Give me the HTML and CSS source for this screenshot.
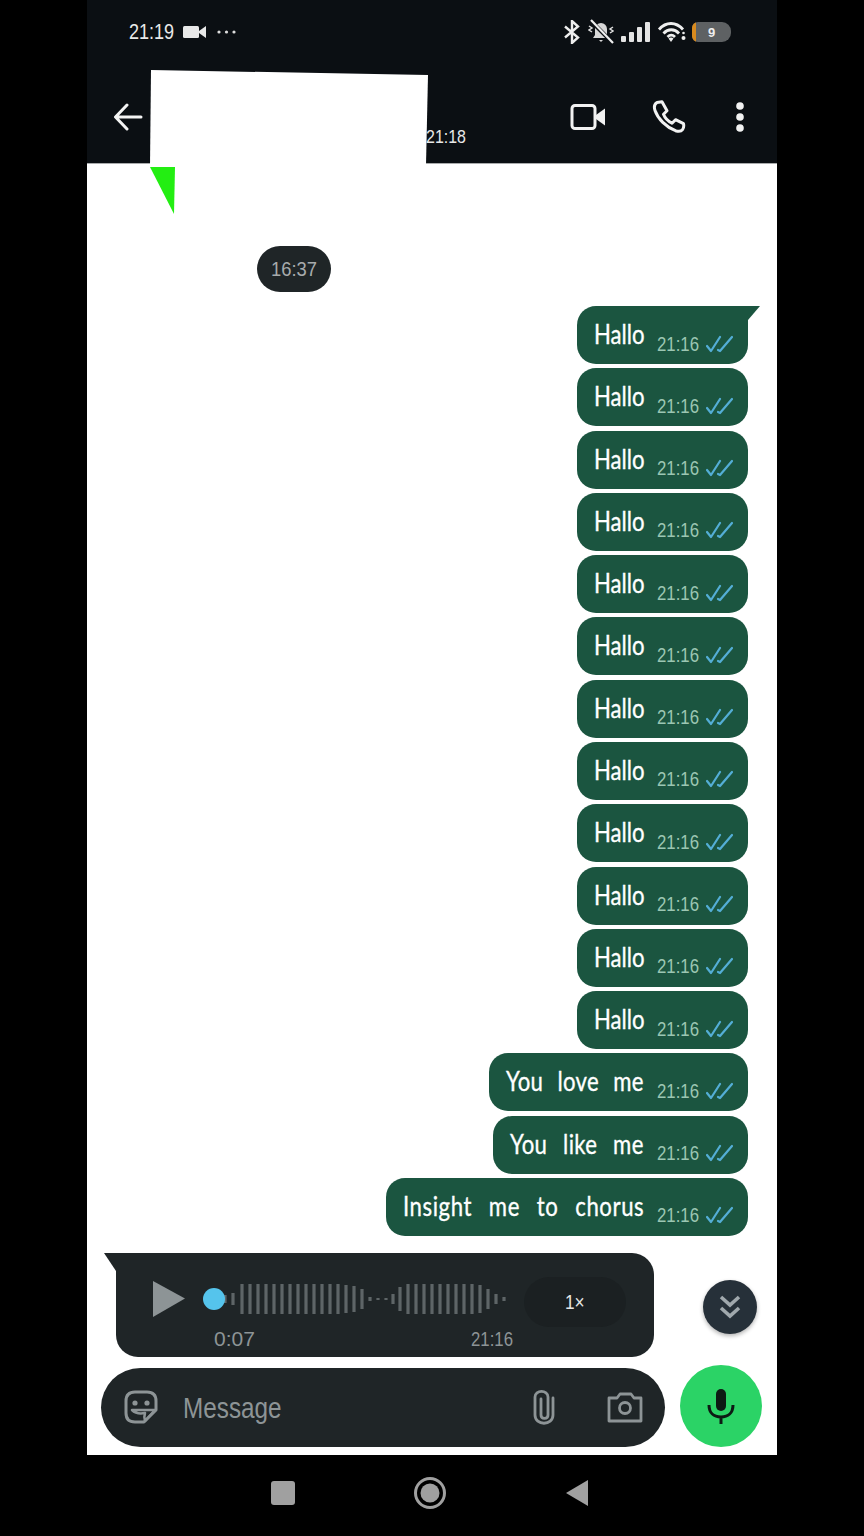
FILE: index.html
```html
<!DOCTYPE html>
<html lang="en">
<head>
<meta charset="utf-8">
<title>Chat</title>
<link rel="stylesheet" href="styles.css">
</head>
<body>
<svg width="0" height="0" class="defs">
  <symbol id="ticks" viewBox="0 0 27 18">
    <path d="M1 11l4 5L14 2M12 15l2 1L26 2" fill="none" stroke="#54aed6" stroke-width="2.200" stroke-linecap="round" stroke-linejoin="round"/>
  </symbol>
</svg>
<main class="phone">
  <header class="top">
    <div class="status">
      <div class="status-left">
        <span class="clock">21:19</span>
        <svg class="rec" width="24" height="14" viewBox="0 0 24 14"><rect x="0" y="1" width="16" height="12" rx="1.5" fill="#e8e8e8"/><path d="M16 6l7-5v12l-7-5z" fill="#e8e8e8"/></svg>
        <svg class="more" width="19" height="4" viewBox="0 0 19 4"><circle cx="2" cy="2" r="1.6" fill="#ddd"/><circle cx="9.500" cy="2" r="1.600" fill="#ddd"/><circle cx="17" cy="2" r="1.600" fill="#ddd"/></svg>
      </div>
      <div class="status-right">
        <svg width="18" height="24" viewBox="0 0 18 24"><path d="M2 6.500l13 11-6 5.500V1l6 5.500-13 11" fill="none" stroke="#eee" stroke-width="2.400"/></svg>
        <svg width="26" height="26" viewBox="0 0 26 26"><path d="M13 4a6 6 0 0 1 6 6v6l2 3H5l2-3v-6a6 6 0 0 1 6-6zM11 21h4l-2 2z" fill="#d8d8d8"/><path d="M2 1l23 23" stroke="#0b0f13" stroke-width="4"/><path d="M3 1l22 23" stroke="#eee" stroke-width="2.200"/><path d="M1 7l3 2-3 2 3 2M25 8l-3 2 3 2-3 2" fill="none" stroke="#ddd" stroke-width="1.500"/></svg>
        <svg width="29" height="21" viewBox="0 0 29 21"><rect x="0" y="14" width="5" height="6" rx="1" fill="#e4e4e4"/><rect x="8" y="10" width="5" height="10" rx="1" fill="#e4e4e4"/><rect x="16" y="5" width="5" height="15" rx="1" fill="#e4e4e4"/><rect x="24" y="0" width="5" height="20" rx="1" fill="#e4e4e4"/></svg>
        <svg width="30" height="21" viewBox="0 0 30 21"><path d="M2 7.500C9-.5 19-.5 26 7.500M6.500 11.500c4.500-5 11-5 15.500 0M10.500 15c2.500-2.500 5-2.500 7.500 0" fill="none" stroke="#eee" stroke-width="2.800"/><path d="M11.500 16.500c1.500-1.300 3.500-1.300 5 0L14 20z" fill="#eee"/><circle cx="26.500" cy="16" r="2" fill="#eee"/><circle cx="26.500" cy="11" r="1.300" fill="#eee"/></svg>
        <div class="battery"><span class="battery-fill"></span><span class="battery-num">9</span></div>
      </div>
    </div>
    <div class="appbar">
      <svg class="back" width="30" height="28" viewBox="0 0 30 28"><path d="M28 14H3M14 2L2.500 14 14 26" fill="none" stroke="#f4f4f4" stroke-width="3" stroke-linecap="round" stroke-linejoin="round"/></svg>
      <span class="seen">21:18</span>
      <div class="actions">
        <svg width="36" height="30" viewBox="0 0 36 30"><rect x="2" y="3.500" width="23" height="23" rx="3" fill="none" stroke="#f2f2f2" stroke-width="3"/><path d="M26 13l9-6.500v17L26 17z" fill="#f2f2f2"/></svg>
        <svg class="call" width="34" height="34" viewBox="0 0 34 34"><path d="M5 2.500l5-.8 5 9-3.500 3.500c1.500 4 4.500 7 8.500 9l3.500-3.500 8 4c.5 2 0 4.500-1 6-1.500 2-4.500 1.800-7 1C14 27 6 19 3 10.500 2 7.500 2.500 4 5 2.500z" fill="none" stroke="#f2f2f2" stroke-width="3" stroke-linejoin="round"/></svg>
        <svg width="10" height="30" viewBox="0 0 10 30"><circle cx="5" cy="4" r="3.800" fill="#f2f2f2"/><circle cx="5" cy="15" r="3.800" fill="#f2f2f2"/><circle cx="5" cy="26" r="3.800" fill="#f2f2f2"/></svg>
      </div>
    </div>
    <svg class="mask" width="280" height="146" viewBox="0 0 280 146"><path d="M2 0L279 5 277 95H1z" fill="#fff"/><path d="M1 97H26L25 144z" fill="#23ee12"/></svg>
  </header>

  <section class="chat">
    <div class="date"><span class="date-text">16:37</span></div>
    <div class="thread">
      <div class="msg first w-hallo"><span class="txt">Hallo</span><span class="meta"><span class="time">21:16</span><svg class="tick"><use href="#ticks"/></svg></span></div>
      <div class="msg w-hallo"><span class="txt">Hallo</span><span class="meta"><span class="time">21:16</span><svg class="tick"><use href="#ticks"/></svg></span></div>
      <div class="msg w-hallo"><span class="txt">Hallo</span><span class="meta"><span class="time">21:16</span><svg class="tick"><use href="#ticks"/></svg></span></div>
      <div class="msg w-hallo"><span class="txt">Hallo</span><span class="meta"><span class="time">21:16</span><svg class="tick"><use href="#ticks"/></svg></span></div>
      <div class="msg w-hallo"><span class="txt">Hallo</span><span class="meta"><span class="time">21:16</span><svg class="tick"><use href="#ticks"/></svg></span></div>
      <div class="msg w-hallo"><span class="txt">Hallo</span><span class="meta"><span class="time">21:16</span><svg class="tick"><use href="#ticks"/></svg></span></div>
      <div class="msg w-hallo"><span class="txt">Hallo</span><span class="meta"><span class="time">21:16</span><svg class="tick"><use href="#ticks"/></svg></span></div>
      <div class="msg w-hallo"><span class="txt">Hallo</span><span class="meta"><span class="time">21:16</span><svg class="tick"><use href="#ticks"/></svg></span></div>
      <div class="msg w-hallo"><span class="txt">Hallo</span><span class="meta"><span class="time">21:16</span><svg class="tick"><use href="#ticks"/></svg></span></div>
      <div class="msg w-hallo"><span class="txt">Hallo</span><span class="meta"><span class="time">21:16</span><svg class="tick"><use href="#ticks"/></svg></span></div>
      <div class="msg w-hallo"><span class="txt">Hallo</span><span class="meta"><span class="time">21:16</span><svg class="tick"><use href="#ticks"/></svg></span></div>
      <div class="msg w-hallo"><span class="txt">Hallo</span><span class="meta"><span class="time">21:16</span><svg class="tick"><use href="#ticks"/></svg></span></div>
      <div class="msg w-love"><span class="txt">You love me</span><span class="meta"><span class="time">21:16</span><svg class="tick"><use href="#ticks"/></svg></span></div>
      <div class="msg w-like"><span class="txt">You like me</span><span class="meta"><span class="time">21:16</span><svg class="tick"><use href="#ticks"/></svg></span></div>
      <div class="msg w-chorus"><span class="txt">Insight me to chorus</span><span class="meta"><span class="time">21:16</span><svg class="tick"><use href="#ticks"/></svg></span></div>
    </div>

    <div class="audio-row">
      <div class="audio">
        <div class="player">
          <svg class="play" width="34" height="38" viewBox="0 0 34 38"><path d="M1 1l32 17.500L1 37z" fill="#8d9496"/></svg>
          <div class="track">
            <svg class="wave" width="286" height="36" viewBox="0 0 286 36">
              <path d="M2 14v8M10 12v12M19 3v30M27 3v30M35 3v30M43 3v30M51 3v30M59 3v30M67 3v30M75 3v30M83 3v30M91 3v30M99 3v30M107 3v30M115 3v30M123 4v28M131 5v26M139 8v20M147 16v4M155 17v2M163 17v2M170 13v10M177 6v24M185 3v30M193 3v30M201 3v30M209 3v30M217 3v30M225 3v30M233 3v30M241 3v30M249 3v30M257 4v28M265 8v20M273 13v10M281 16v4" stroke="#5e6567" stroke-width="3.200" fill="none"/>
            </svg>
            <span class="dot"></span>
          </div>
          <span class="speed"><span class="speed-text">1×</span></span>
        </div>
        <div class="audio-foot">
          <span class="audio-len">0:07</span>
          <span class="audio-time">21:16</span>
        </div>
      </div>
      <div class="jump">
        <svg width="22" height="26" viewBox="0 0 22 26"><path d="M2 3l9 8 9-8M2 14l9 8 9-8" fill="none" stroke="#a0a8ad" stroke-width="3.600"/></svg>
      </div>
    </div>

    <div class="input-row">
      <div class="input">
        <svg class="sticker" width="36" height="36" viewBox="0 0 36 36"><path d="M12 3h12c6 0 9 3 9 9v9L21 33h-9c-6 0-9-3-9-9V12c0-6 3-9 9-9z" fill="none" stroke="#8d9496" stroke-width="3" stroke-linejoin="round"/><circle cx="12" cy="14" r="2.600" fill="#8d9496"/><circle cx="24" cy="14" r="2.600" fill="#8d9496"/><path d="M9 21h23l-10 11c-1-3-1-5 0-8-5 1-10 0-13-3z" fill="none" stroke="#8d9496" stroke-width="2.500" stroke-linejoin="round"/></svg>
        <span class="placeholder">Message</span>
        <svg class="clip" width="26" height="36" viewBox="0 0 26 36"><path d="M10 10v16c0 4.500 7 4.500 7 0V8C17 .5 4 .5 4 8v18c0 11 18 11 18 0V9" fill="none" stroke="#8d9496" stroke-width="2.800" stroke-linecap="round"/></svg>
        <svg class="cam" width="36" height="32" viewBox="0 0 36 32"><path d="M2 7h8l3-4h11l3 4h7v23H2z" fill="none" stroke="#8d9496" stroke-width="2.800" stroke-linejoin="round"/><circle cx="18" cy="17" r="5.500" fill="none" stroke="#8d9496" stroke-width="2.800"/></svg>
      </div>
      <div class="mic">
        <svg width="28" height="36" viewBox="0 0 28 36"><rect x="9" y="1" width="10" height="22" rx="5" fill="#0d1a14"/><path d="M2 17c0 8 5 12 12 12s12-4 12-12M14 28v8" fill="none" stroke="#0d1a14" stroke-width="3"/></svg>
      </div>
    </div>
  </section>

  <nav class="nav">
    <span class="nav-square"></span>
    <svg width="34" height="34" viewBox="0 0 34 34"><circle cx="17" cy="17" r="14.500" fill="none" stroke="#a0a0a0" stroke-width="3"/><circle cx="17" cy="17" r="9.500" fill="#a0a0a0"/></svg>
    <svg width="24" height="28" viewBox="0 0 24 28"><path d="M23 1v26L1 14z" fill="#a0a0a0"/></svg>
  </nav>
</main>
</body>
</html>
```

FILE: styles.css
```css
* { box-sizing: border-box; }
html, body { margin: 0; background: #000; }
body {
  width: 864px;
  height: 1536px;
  overflow: hidden;
  font-family: "Liberation Sans", sans-serif;
}
.defs { position: absolute; }
.phone {
  position: relative;
  width: 690px;
  height: 1536px;
  margin-left: 87px;
  display: flex;
  flex-direction: column;
}

/* the reference's typeface is a condensed hand; the installed fonts are squeezed to its width */
.clock, .seen, .date-text, .txt, .time, .audio-time, .placeholder, .speed-text {
  display: inline-block;
  white-space: nowrap;
  transform-origin: left center;
}

/* top */
.top {
  position: relative;
  height: 164px;
  flex: none;
  background: #0b0f13;
  border-bottom: 1px solid #a9abac;
  display: flex;
  flex-direction: column;
}
.status {
  height: 64px;
  padding: 0 46px 0 42px;
  display: flex;
  align-items: center;
  justify-content: space-between;
}
.status-left { display: flex; align-items: center; }
.clock { color: #e8e8e8; font-size: 22px; width: 54px; transform: scaleX(.82); }
.more { margin-left: 10px; }
.status-right { display: flex; align-items: center; gap: 7px; }
.battery {
  position: relative;
  width: 39px;
  height: 20px;
  margin-left: -2px;
  border-radius: 6px 9px 9px 6px;
  background: #5e6163;
  overflow: hidden;
  display: flex;
  align-items: center;
  justify-content: center;
}
.battery-fill { position: absolute; left: 0; top: 0; bottom: 0; width: 4px; background: #d98a1e; }
.battery-num { color: #eee; font-size: 13px; font-weight: 700; }
.appbar {
  flex: 1;
  padding: 7px 32px 0 26px;
  display: flex;
  align-items: center;
  position: relative;
}
.seen {
  margin-left: 283px;
  margin-top: 40px;
  width: 41px;
  color: #e8e8e8;
  font-size: 19px;
  transform: scaleX(.84);
}
.actions { margin-left: auto; display: flex; align-items: center; gap: 47.5px; }
.call { margin: 0 2px 0 -2px; }
.mask { position: absolute; left: 62px; top: 70px; }

/* chat */
.chat {
  flex: 1;
  background: #fff;
  display: flex;
  flex-direction: column;
}
.date {
  margin: 82px 0 14px 170px;
  width: 74px;
  height: 46px;
  flex: none;
  padding-left: 14px;
  border-radius: 23px;
  background: #1f2527;
  color: #a7abac;
  font-size: 20px;
  display: flex;
  align-items: center;
}
.date-text { transform: scaleX(.92); }
.thread {
  display: flex;
  flex-direction: column;
  align-items: flex-end;
  gap: 4.29px;
  padding-right: 29px;
}
.msg {
  position: relative;
  height: 58px;
  flex: none;
  padding: 0 15px 0 17px;
  border-radius: 19px;
  background: #1b5540;
  display: flex;
  align-items: center;
}
.first { border-top-right-radius: 0; }
.first::after {
  content: "";
  position: absolute;
  left: 100%;
  top: 0;
  width: 12px;
  height: 14px;
  background: #1b5540;
  clip-path: polygon(0 0, 100% 0, 0 100%);
}
.w-hallo { width: 171px; }
.w-love { width: 259px; }
.w-like { width: 255px; }
.w-chorus { width: 362px; }
.txt {
  flex: 1;
  min-width: 0;
  color: #fff;
  font-family: Lato, "Liberation Sans", sans-serif;
  font-size: 27px;
  line-height: 30px;
  margin-top: -2px;
  word-spacing: 10px;
  -webkit-text-stroke: .35px #fff;
  transform: scaleX(.82);
}
.w-love .txt { letter-spacing: .4px; }
.w-like .txt { letter-spacing: .4px; word-spacing: 12px; }
.w-chorus .txt { letter-spacing: .7px; word-spacing: 13px; }
.meta { flex: none; display: flex; align-items: center; gap: 7px; margin-top: 17px; }
.time { width: 42px; color: #9cc6b3; font-size: 20px; line-height: 22px; transform: scaleX(.84); }
.tick { width: 27px; height: 18px; }

/* audio */
.audio-row {
  display: flex;
  align-items: flex-start;
  margin-top: 17px;
  padding-left: 29px;
}
.audio {
  position: relative;
  width: 538px;
  height: 104px;
  border-radius: 0 22px 22px 22px;
  background: #1f2527;
  padding: 20px 27px 0 36px;
}
.audio::before {
  content: "";
  position: absolute;
  right: 100%;
  top: 0;
  width: 12px;
  height: 18px;
  background: #1f2527;
  clip-path: polygon(0 0, 100% 0, 100% 100%);
}
.player { display: flex; align-items: center; height: 52px; }
.track { position: relative; margin-left: 17px; width: 306px; height: 36px; padding-left: 20px; flex: none; }
.wave { display: block; }
.dot {
  position: absolute;
  left: 0;
  top: 7px;
  width: 22px;
  height: 22px;
  border-radius: 50%;
  background: #55c4ec;
}
.speed {
  margin: 6px 0 0 15px;
  width: 102px;
  height: 50px;
  flex: none;
  border-radius: 25px;
  background: #1b2022;
  color: #e6e6e6;
  font-size: 21px;
  display: flex;
  align-items: center;
  justify-content: center;
}
.speed-text { margin-left: 3px; transform: scaleX(.82); }
.audio-foot {
  display: flex;
  margin-top: 1px;
  padding-left: 62px;
  color: #8d9496;
  font-size: 21px;
  line-height: 26px;
}
.audio-len { width: 40px; }
.audio-time { margin-left: 217px; transform: scaleX(.8); }
.jump {
  width: 54px;
  height: 54px;
  margin: 27px 0 0 49px;
  border-radius: 50%;
  background: #263039;
  box-shadow: 0 2px 4px rgba(0, 0, 0, .3);
  display: flex;
  align-items: center;
  justify-content: center;
}

/* input */
.input-row {
  display: flex;
  align-items: flex-start;
  margin-top: 11px;
  padding-left: 14px;
}
.input {
  width: 564px;
  height: 79px;
  border-radius: 40px;
  background: #1f2527;
  display: flex;
  align-items: center;
  padding: 0 22px;
}
.placeholder {
  margin: 2px 0 0 24px;
  flex: 1;
  color: #8d9496;
  font-size: 30px;
  transform: scaleX(.81);
}
.clip { margin-right: 50px; }
.mic {
  width: 82px;
  height: 82px;
  margin: -3px 0 0 15px;
  border-radius: 50%;
  background: #2bd366;
  display: flex;
  align-items: center;
  justify-content: center;
}

/* nav */
.nav {
  height: 81px;
  flex: none;
  background: #000;
  display: flex;
  align-items: center;
  padding: 0 0 6px 184px;
  gap: 118px;
}
.nav-square {
  width: 24px;
  height: 24px;
  border-radius: 3px;
  background: #a0a0a0;
}
```
